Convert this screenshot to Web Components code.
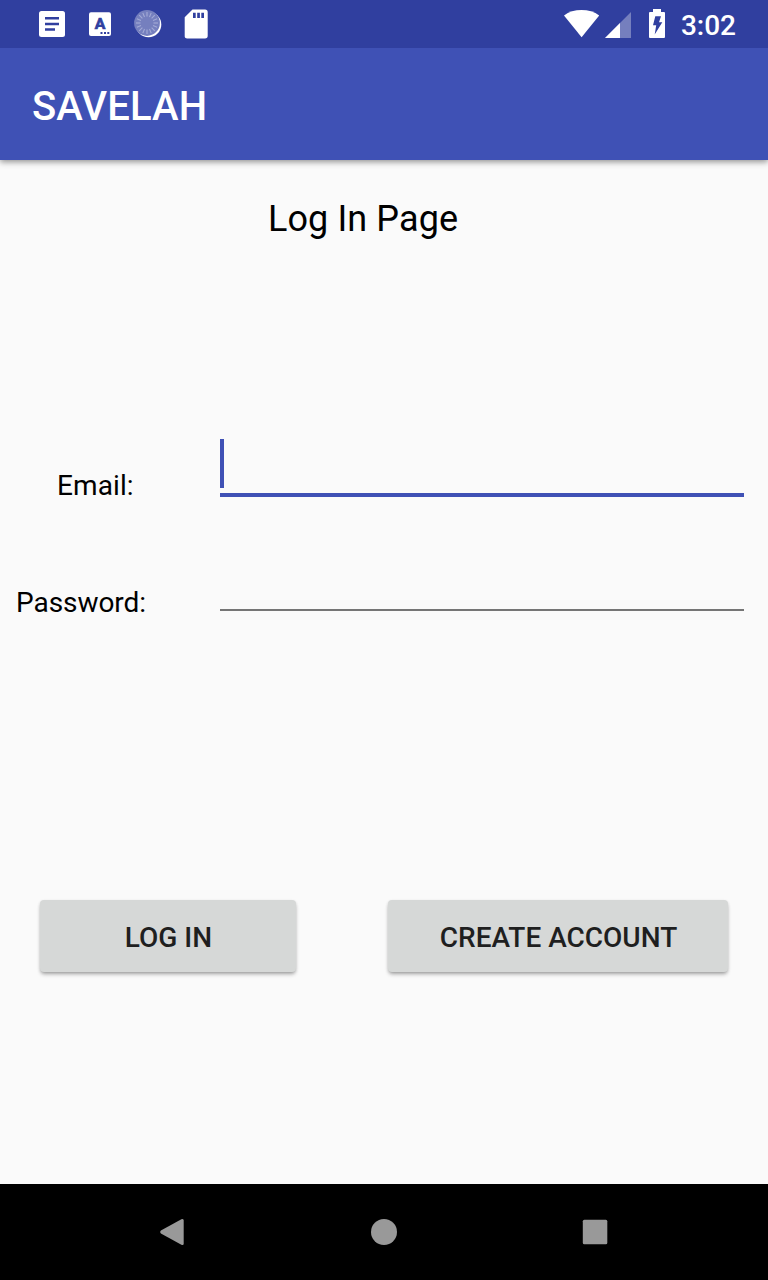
<!DOCTYPE html>
<html lang="en">
<head>
<meta charset="utf-8">
<title>SAVELAH</title>
<style>
html,body{margin:0;height:100%}
body{font-family:Roboto,"Liberation Sans",sans-serif;background:#fafafa;overflow:hidden}
</style>
</head>
<body>
<login-screen></login-screen>
<script>
const define = (name, html) => {
  const template = document.createElement('template');
  template.innerHTML = html;
  customElements.define(name, class extends HTMLElement {
    constructor() {
      super();
      this.attachShadow({mode: 'open'}).append(template.content.cloneNode(true));
    }
  });
};

const rays = Array.from({length: 16}, (_, i) =>
  `<path d="M23 12v4.500" transform="rotate(${i * 22.5} 23 23)"/>`).join('');

define('status-bar', `
<style>
:host{display:flex;height:48px;flex:none;background:#303f9f;color:#fff;padding:0 32px 0 28px;box-sizing:border-box;align-items:center}
svg{display:block;flex:none;fill:#fff}
.gap{flex:1}
.clock{font-size:28px;font-weight:500;line-height:48px;padding-top:2px;height:46px}
</style>
<svg width="48" height="48"><rect x="11" y="11" width="26" height="26" rx="2.5"/><path fill="#303f9f" d="M17 17h14v2.500H17zM17 22.700h14v2.500H17zM17 28.300h10v2.500H17z"/></svg>
<svg width="48" height="48"><rect x="13" y="12.300" width="22" height="23.700" rx="2"/><text x="18.700" y="29.300" textLength="10.600" lengthAdjust="spacingAndGlyphs" font-family="Roboto" font-weight="700" font-size="15.500" fill="#303f9f" stroke="#303f9f" stroke-width=".7">A</text><path fill="#303f9f" d="M24.500 32h2v2h-2zM28 32h2v2h-2zM31.300 32h2v2h-2z"/></svg>
<svg width="48" height="48"><circle cx="24.500" cy="24.500" r="12.800"/><circle cx="23" cy="23" r="12.900" fill="#757fbe"/><g stroke="#a4abd6" stroke-width="1.100" fill="none">${rays}</g></svg>
<svg width="48" height="48"><path d="M20.500 9.500H33a2.700 2.700 0 0 1 2.700 2.700V35.700a2.700 2.700 0 0 1-2.700 2.700H15.200a2.500 2.500 0 0 1-2.500-2.700V17.300z"/><path fill="#303f9f" d="M21 12.700h2.700v5.300H21zM25.200 12.700h2.700v5.300h-2.700zM29.300 12.700H32v5.300h-2.700z"/></svg>
<span class="gap"></span>
<svg width="42" height="48"><path d="M4 15.500C13 8.300 30 8.300 39.200 15.500L21.600 37.200z"/></svg>
<svg width="34" height="48"><path fill="#757fbe" d="M29 12v26H3z"/><path d="M18 23v15H3z"/></svg>
<svg width="45" height="48"><path d="M17 9h8v3h3q1 0 1 1v24q0 1-1 1H14q-1 0-1-1V13q0-1 1-1h3z"/><path fill="#303f9f" d="M19.300 16.300h5.700l-2 6h3.300L18.700 34.500l1.500-9.200h-3.200z"/></svg>
<span class="clock">3:02</span>`);

define('app-bar', `
<style>
:host{display:flex;flex:none;height:112px;box-sizing:border-box;align-items:center;padding:4px 32px 0;background:#3f51b5;color:#fff;font-size:40px;letter-spacing:.12px;font-weight:500;box-shadow:0 2px 6px rgba(0,0,0,.42);clip-path:inset(0 0 -12px);z-index:1}
</style><slot></slot>`);

define('form-field', `
<style>
:host{display:grid;grid-template-columns:220px 1fr;padding-right:24px;height:66px;box-sizing:border-box;color:#000;font-size:28px}
.label{line-height:33px;align-self:end;padding:0 0 3px var(--inset,16px)}
.entry{height:var(--entry-height,58px);box-sizing:border-box;border-bottom:var(--line,2px solid #757575)}
.caret{display:block;width:4px;height:49px;background:var(--caret,transparent)}
</style>
<span class="label"><slot></slot></span><div class="entry"><span class="caret"></span></div>`);

define('raised-button', `
<style>
:host{display:block}
button{display:block;width:100%;height:72px;border:0;border-radius:4px;background:#d6d8d7;color:#1f1f1f;font:500 28px/32px Roboto,"Liberation Sans",sans-serif;padding:3px 0 0 1px;text-align:center;box-shadow:0 3px 4px -1px rgba(0,0,0,.32),0 1px 3px rgba(0,0,0,.12)}
</style><button><slot></slot></button>`);

define('nav-bar', `
<style>
:host{display:flex;flex:none;height:96px;background:#000;align-items:center;justify-content:center;gap:163px}
svg{display:block;fill:#999}
</style>
<svg width="48" height="48"><path d="M11.900 22.600L32.400 11.200Q34.700 10.300 34.700 12.500V35.500Q34.700 37.800 32.400 36.800L11.900 25.400Q10.200 24 11.900 22.600z"/></svg>
<svg width="48" height="48"><circle cx="24" cy="24" r="13"/></svg>
<svg width="48" height="48"><rect x="11.800" y="11.800" width="24.500" height="24.500" rx="1.500"/></svg>`);

define('login-screen', `
<style>
:host{display:flex;flex-direction:column;width:768px;height:1280px;background:#fafafa}
main{flex:1;display:flex;flex-direction:column}
h1{margin:38px 0 0 268px;font-size:36px;font-weight:400;letter-spacing:.1px;line-height:42px;color:#000}
.fields{margin-top:199px;display:flex;flex-direction:column;gap:51px}
.email{--inset:57px;--line:4px solid #3f51b5;--caret:#3f51b5;letter-spacing:.1px}
.password{--entry-height:55px;letter-spacing:-.05px}
.actions{display:grid;grid-template-columns:256px 340px;justify-content:space-between;padding:0 40px;margin-top:278px}
</style>
<status-bar></status-bar>
<app-bar>SAVELAH</app-bar>
<main>
<h1>Log In Page</h1>
<div class="fields"><form-field class="email">Email:</form-field><form-field class="password">Password:</form-field></div>
<div class="actions"><raised-button>LOG IN</raised-button><raised-button>CREATE ACCOUNT</raised-button></div>
</main>
<nav-bar></nav-bar>`);
</script>
</body>
</html>
